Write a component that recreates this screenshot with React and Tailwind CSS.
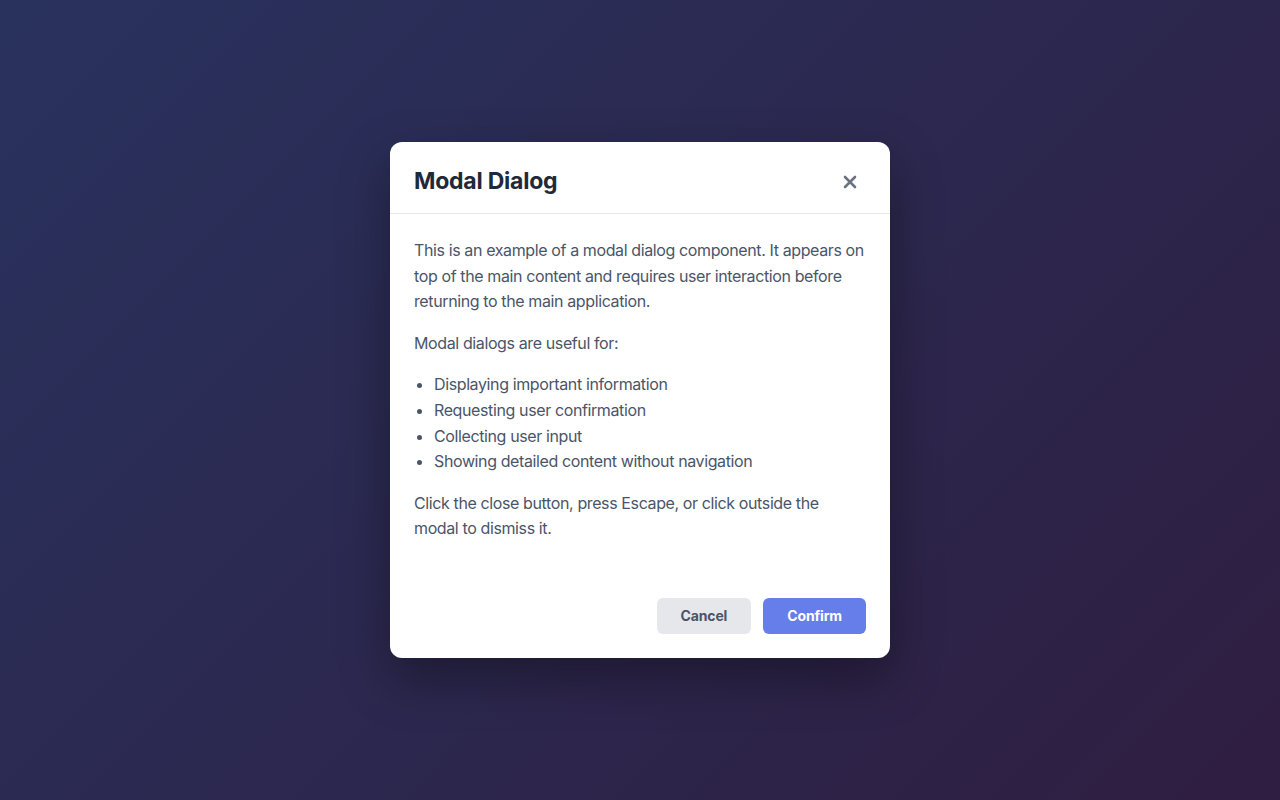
import React, { useState } from 'react';

const uses = [
  'Displaying important information',
  'Requesting user confirmation',
  'Collecting user input',
  'Showing detailed content without navigation'
];

export default function App() {
  const [open, setOpen] = useState(true);

  return (
    <div className="relative min-h-screen w-full bg-[linear-gradient(135deg,#667eea_0%,#764ba2_100%)] font-['Inter','Noto_Sans',sans-serif]">
      <div className="min-h-screen w-full bg-black/60 flex items-center justify-center">
        {open && (
          <div className="w-[500px] bg-white rounded-xl shadow-[0_20px_50px_rgba(0,0,0,0.35)] overflow-hidden">
            <div className="flex items-center justify-between px-6 pt-2 h-[72px] border-b border-gray-200">
              <h2 className="text-[23px] font-bold text-gray-800 tracking-[-0.01em]">Modal Dialog</h2>
              <button
                onClick={() => setOpen(false)}
                className="w-8 h-8 flex items-center justify-center rounded text-gray-500 hover:bg-gray-100"
                aria-label="Close"
              >
                <svg width="14" height="14" viewBox="0 0 14 14" fill="none" stroke="currentColor" strokeWidth="2.6" strokeLinecap="round">
                  <path d="M2 2 L12 12 M12 2 L2 12" />
                </svg>
              </button>
            </div>

            <div className="px-6 pt-6 pb-2 text-base leading-[1.6] text-[#4a5568] tracking-[-0.024em]">
              <p className="mb-4">
                This is an example of a modal dialog component. It appears on top of the main content and requires user interaction before returning to the main application.
              </p>
              <p className="mb-4">Modal dialogs are useful for:</p>
              <ul className="list-disc pl-5 mb-4">
                {uses.map((u) => (
                  <li key={u}>{u}</li>
                ))}
              </ul>
              <p className="mb-4">
                Click the close button, press Escape, or click outside the modal to dismiss it.
              </p>
            </div>

            <div className="flex justify-end gap-3 px-6 pt-8 pb-6">
              <button className="h-9 px-6 rounded-md bg-gray-200 text-[#4a5568] text-sm font-bold tracking-[-0.01em]">Cancel</button>
              <button className="h-9 px-6 rounded-md bg-[#667eea] text-white text-sm font-bold tracking-[-0.01em]">Confirm</button>
            </div>
          </div>
        )}
      </div>
    </div>
  );
}
